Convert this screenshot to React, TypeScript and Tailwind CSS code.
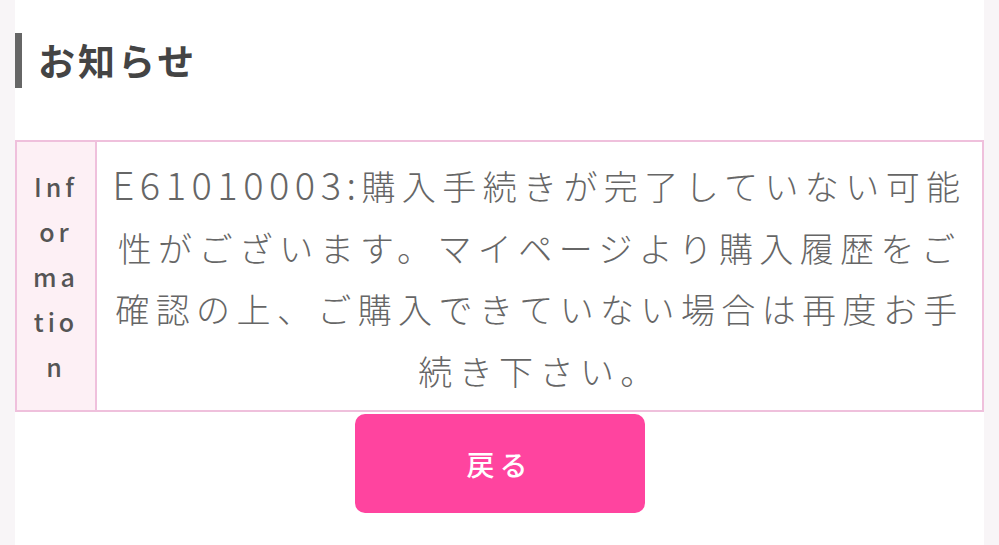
import React from 'react';

const jp = '"Noto Sans CJK JP", "Noto Sans", sans-serif';

const App: React.FC = () => {
  return (
    <div className="min-h-screen bg-[#f8f5f7] px-[15px]" style={{ fontFamily: jp }}>
      <div className="min-h-[545px] bg-white pt-[33px]">
        <h2 className="flex h-[55px] items-center border-l-[7px] border-[#666666] pl-[16px] text-[37px] font-bold leading-none tracking-[3px] text-[#444444]">
          お知らせ
        </h2>

        <div className="mt-[52px] flex border-2 border-[#efc0dc]">
          <div className="flex w-[80px] shrink-0 items-center justify-center border-r-2 border-[#efc0dc] bg-[#fdf0f5] px-[15px]">
            <p className="break-all text-center text-[25px] font-medium leading-[45px] tracking-[4px] text-[#555555]">
              Information
            </p>
          </div>
          <div className="flex-1 px-[12px] pb-[9px] pt-[11px]">
            <p className="text-center text-[34px] font-light leading-[61.5px] tracking-[6.4px] text-[#666666]">
              <span className="text-[38px] tracking-[5.5px]">E61010003:</span>
              購入手続きが完了していない可能性がございます。マイページより購入履歴をご確認の上、ご購入できていない場合は再度お手続き下さい。
            </p>
          </div>
        </div>

        <div className="mt-[2px] flex justify-center">
          <button className="flex h-[99px] w-[290px] items-center justify-center rounded-[10px] bg-[#ff449f] text-[28px] font-medium tracking-[5px] text-white">
            戻る
          </button>
        </div>
      </div>
    </div>
  );
};

export default App;
